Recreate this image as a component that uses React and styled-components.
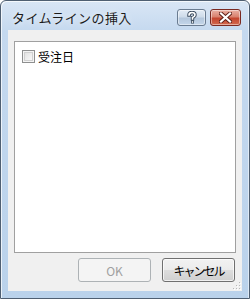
import React from 'react'
import styled, {createGlobalStyle} from 'styled-components'

const GlobalStyles = createGlobalStyle`
	html, body {
		margin: 0;
		padding: 0;
		background: #ffffff;
	}
	body {
		font-family: "Noto Sans CJK JP", "DejaVu Sans", sans-serif;
	}
`

const Window = styled.div`
	position: relative;
	box-sizing: border-box;
	width: 250px;
	height: 299px;
	border: 1px solid #4f5f72;
	border-radius: 6px 6px 0 0;
	background: linear-gradient(to bottom, #d9e6f5 0px, #c5d9ef 30px, #bad2eb 100%);
	display: flex;
	flex-direction: column;
	box-shadow: inset 1px 1px 0 rgba(255, 255, 255, 0.7), inset -1px 0 0 rgba(255, 255, 255, 0.5);
`

const TitleBar = styled.div`
	height: 29px;
	display: flex;
	align-items: flex-start;
	padding: 0 8px 0 11px;
`

const Title = styled.div`
	flex: 1;
	font-size: 13px;
	line-height: 15px;
	letter-spacing: 0.4px;
	margin-top: 9px;
	color: #1b1b1b;
	text-shadow: 0 0 6px rgba(255, 255, 255, 0.9);
	white-space: nowrap;
`

const Caption = styled.div`
	display: flex;
	gap: 4px;
	margin-top: 8px;
`

const CaptionButton = styled.div`
	box-sizing: border-box;
	width: ${p => p.$w}px;
	height: 17px;
	border-radius: 3px;
	display: flex;
	align-items: center;
	justify-content: center;
	border: 1px solid ${p => (p.$close ? '#7a2a22' : '#6a7c91')};
	background: ${p =>
		p.$close
			? 'linear-gradient(to bottom, #eab0a4 0%, #d9826f 45%, #c4452f 55%, #d26a4f 100%)'
			: 'linear-gradient(to bottom, #e3ecf6 0%, #cfdcea 45%, #b4c7dc 55%, #c4d6ea 100%)'};
	box-shadow: inset 0 0 0 1px rgba(255, 255, 255, 0.45);
`

const Client = styled.div`
	flex: 1;
	margin: 0 7px 7px 7px;
	background: #f0f0f0;
	display: flex;
	flex-direction: column;
	padding: 11px 6px 9px 6px;
	position: relative;
`

const ListPanel = styled.div`
	box-sizing: border-box;
	height: 212px;
	background: #ffffff;
	border: 1px solid #a0a0a0;
	padding: 6px 0 0 7px;
`

const CheckRow = styled.label`
	display: flex;
	align-items: center;
	gap: 3px;
	font-size: 12px;
	color: #000000;
`

const CheckBox = styled.span`
	box-sizing: border-box;
	width: 13px;
	height: 13px;
	border: 1px solid #8e8f8f;
	background: linear-gradient(135deg, #dcdcdc 0%, #f4f4f4 70%, #ffffff 100%);
	box-shadow: inset 0 0 0 1px #f4f4f4, inset 0 0 0 2px #d0d0d0;
`

const ButtonRow = styled.div`
	display: flex;
	justify-content: flex-end;
	gap: 11px;
	margin-top: 5px;
	padding-right: 1px;
`

const DialogButton = styled.div`
	box-sizing: border-box;
	width: 73px;
	height: 24px;
	border-radius: 3px;
	display: flex;
	align-items: center;
	justify-content: center;
	font-size: 12px;
	letter-spacing: ${p => (p.$narrow ? '-2px' : '0')};
	border: 1px solid ${p => (p.$disabled ? '#adb2b5' : '#707070')};
	color: ${p => (p.$disabled ? '#a0a0a0' : '#000000')};
	background: ${p =>
		p.$disabled
			? '#f4f4f4'
			: 'linear-gradient(to bottom, #f2f2f2 0%, #ebebeb 50%, #dddddd 51%, #cfcfcf 100%)'};
	box-shadow: ${p => (p.$disabled ? 'none' : 'inset 0 0 0 1px rgba(255, 255, 255, 0.7)')};
`

const SizeGrip = styled.svg`
	position: absolute;
	right: 1px;
	bottom: 1px;
`

const HelpIcon = () => (
	<svg width="10" height="13" viewBox="0 0 10 13">
		<path d="M2 4 Q2 1.5 5 1.5 Q8 1.5 8 4 Q8 5.5 5.5 6.5 L5.5 8" fill="none" stroke="#3a4a5c" strokeWidth="3.4" strokeLinecap="square" />
		<path d="M2 4 Q2 1.5 5 1.5 Q8 1.5 8 4 Q8 5.5 5.5 6.5 L5.5 8" fill="none" stroke="#ffffff" strokeWidth="1.6" strokeLinecap="square" />
		<rect x="4" y="9.5" width="3" height="3" fill="#3a4a5c" />
		<rect x="4.8" y="10.2" width="1.4" height="1.6" fill="#ffffff" />
	</svg>
)

const CloseIcon = () => (
	<svg width="13" height="11" viewBox="0 0 13 11">
		<path d="M2 1.5 L11 9.5 M11 1.5 L2 9.5" stroke="#5a1d16" strokeWidth="4" strokeLinecap="square" />
		<path d="M2 1.5 L11 9.5 M11 1.5 L2 9.5" stroke="#ffffff" strokeWidth="2.2" strokeLinecap="square" />
	</svg>
)

const GripIcon = () => (
	<SizeGrip width="9" height="9" viewBox="0 0 9 9">
		{[[7, 1], [4, 4], [7, 4], [1, 7], [4, 7], [7, 7]].map(([x, y]) => (
			<g key={`${x}-${y}`}>
				<rect x={x + 1} y={y + 1} width="1" height="1" fill="#ffffff" />
				<rect x={x} y={y} width="1" height="1" fill="#b8b8b8" />
			</g>
		))}
	</SizeGrip>
)

export default function App() {
	return (
		<>
			<GlobalStyles />
			<Window>
				<TitleBar>
					<Title>タイムラインの挿入</Title>
					<Caption>
						<CaptionButton $w={29}><HelpIcon /></CaptionButton>
						<CaptionButton $w={31} $close><CloseIcon /></CaptionButton>
					</Caption>
				</TitleBar>
				<Client>
					<ListPanel>
						<CheckRow>
							<CheckBox />
							受注日
						</CheckRow>
					</ListPanel>
					<ButtonRow>
						<DialogButton $disabled>OK</DialogButton>
						<DialogButton $narrow>キャンセル</DialogButton>
					</ButtonRow>
					<GripIcon />
				</Client>
			</Window>
		</>
	)
}
